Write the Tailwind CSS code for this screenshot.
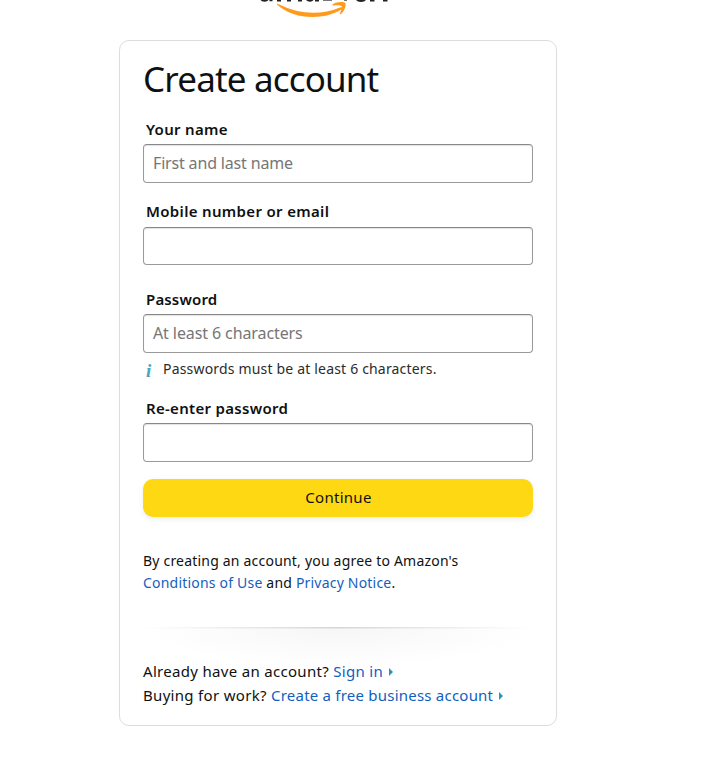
<!DOCTYPE html>
<html lang="en">
<head>
<meta charset="utf-8">
<title>Create account</title>
<script src="https://cdn.jsdelivr.net/npm/@tailwindcss/browser@4"></script>
</head>
<body class="bg-white text-[#0f1111] font-['Noto_Sans','Open_Sans',sans-serif] h-[757px] overflow-hidden">
<header class="h-10">
  <svg class="block ml-[255px]" width="140" height="24" viewBox="255 0 140 24" aria-label="Logo">
    <g fill="#222">
      <path d="M260.500 0h8q-1 1.800-4 1.800t-4-1.800zM269.500 0h3v1.200h-3zM277 0h4v1.500h-4zM287 0h4v1.500h-4zM298 0h4v1.500h-4zM306 0h7.500q-1 1.800-3.500 1.800t-4-1.800zM315 0h4v1.400h-4zM356 0h10q-1.500 2-5 2t-5-2zM370 0h4.500v1.500h-4.500zM383 0h4.500v1.500h-4.500z"/>
      <path d="M323 0h9v1h-9zM344 0h3v1h-3z" fill="#777"/>
    </g>
    <path d="M277 3.500Q310 20 340 7.400c2-.9 3.300.8 1.500 2.100C322 21.500 291 18.500 277 4.500z" fill="#ff9a1c"/>
    <path d="M332.500 4.500c4-3 11-3 12.700-1.600 1.300 1.800-.5 8-4.200 11-.8.600-1.300.2-1-.6 1-2.500 2.300-6 1.500-7.200-.9-1.100-5.100-1-8.300-.7-.9 0-1.200-.5-.7-.9z" fill="#ff9a1c"/>
  </svg>
</header>
<main class="ml-[119px] w-[438px] h-[686px] border border-[#ddd] rounded-[10px] px-[23px]">
  <h1 class="mt-[14px] h-[50px] leading-[47px] text-[35px] tracking-[-0.83px]">Create account</h1>
  <form>
    <label class="block mt-[13px] pl-[3px] h-[22px] leading-[22px] text-[15px] font-semibold tracking-[0.3px]">Your name</label>
    <input class="block mt-[4px] w-full h-[39px] border border-[#999] border-t-[#888] rounded-[4px] px-[9px] text-[16px] tracking-[-0.17px] pb-px placeholder:text-[#767676] shadow-[inset_0_1px_1px_rgba(15,17,17,0.12)]" placeholder="First and last name">
    <label class="block mt-[17px] pl-[3px] h-[22px] leading-[22px] text-[15px] font-semibold tracking-[0.33px]">Mobile number or email</label>
    <input class="block mt-[5px] w-full h-[38px] border border-[#999] border-t-[#888] rounded-[4px] px-[9px] shadow-[inset_0_1px_1px_rgba(15,17,17,0.12)]">
    <label class="block mt-[23px] pl-[3px] h-[22px] leading-[22px] text-[15px] font-semibold tracking-[0.15px]">Password</label>
    <input class="block mt-[4px] w-full h-[39px] border border-[#999] border-t-[#888] rounded-[4px] px-[9px] text-[16px] tracking-[-0.1px] pb-px placeholder:text-[#767676] shadow-[inset_0_1px_1px_rgba(15,17,17,0.12)]" placeholder="At least 6 characters">
    <p class="flex mt-[5px] h-[22px] leading-[22px] text-[14px] text-[#2b2b2b] tracking-[0.18px]"><i class="w-[20px] pl-[3px] pt-[2px] font-['Liberation_Serif',serif] font-bold text-[19px] text-[#4aa3c7]">i</i><span>Passwords must be at least 6 characters.</span></p>
    <label class="block mt-[17px] pl-[3px] h-[22px] leading-[22px] text-[15px] font-semibold tracking-[0.3px]">Re-enter password</label>
    <input class="block mt-[4px] w-full h-[39px] border border-[#999] border-t-[#888] rounded-[4px] px-[9px] shadow-[inset_0_1px_1px_rgba(15,17,17,0.12)]">
    <button type="button" class="block mt-[17px] w-full h-[38px] pb-[2px] pl-[1px] rounded-[10px] bg-[#ffd814] text-[15px] tracking-[0.27px] shadow-[0_2px_5px_rgba(213,217,217,0.5)]">Continue</button>
  </form>
  <p class="mt-[33px] text-[14px] leading-[22px] whitespace-nowrap tracking-[0.2px]">By creating an account, you agree to Amazon's<br><a class="text-[#1560bd]">Conditions of Use</a> and <a class="text-[#1560bd]">Privacy Notice</a>.</p>
  <div class="mt-[33px] h-[40px] -mb-[8px] bg-[radial-gradient(ellipse_50%_100%_at_50%_0%,#f6f6f6,#ffffff)]"><div class="h-px bg-linear-to-r from-white via-[#d5d5d5] to-white"></div><div class="h-px bg-linear-to-r from-white via-[#e6e6e6] to-white"></div></div>
  <div class="text-[15px] leading-[24px] whitespace-nowrap tracking-[0.31px]">
    <p>Already have an account? <a class="text-[#1060c0]">Sign in</a><svg class="inline-block ml-[6px] mb-[2px]" width="4" height="8"><path d="M0 0l4 4-4 4z" fill="#2795bd"/></svg></p>
    <p>Buying for work? <a class="text-[#1060c0] tracking-[0.22px]">Create a free business account</a><svg class="inline-block ml-[6px] mb-[2px]" width="4" height="8"><path d="M0 0l4 4-4 4z" fill="#2795bd"/></svg></p>
  </div>
</main>
</body>
</html>
